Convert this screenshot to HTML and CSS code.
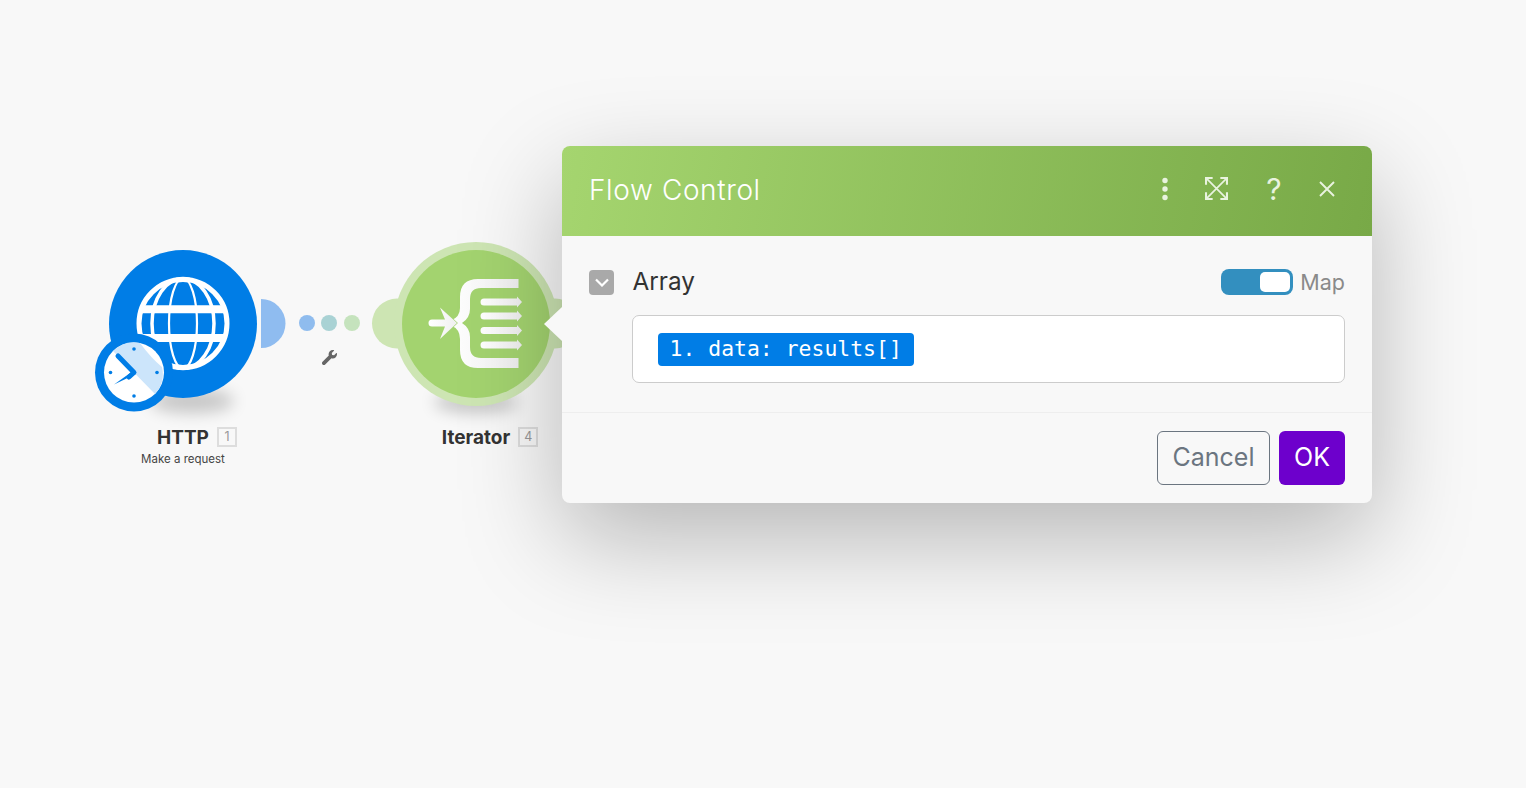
FILE: index.html
```html
<!DOCTYPE html>
<html lang="en">
<head>
<meta charset="utf-8">
<title>Flow Control</title>
<link rel="stylesheet" href="styles.css">
</head>
<body>
<main class="canvas">
  <section class="node node-http">
    <svg class="node-art" viewBox="73 240 220 170" aria-hidden="true">
      <defs>
        <filter id="soft" x="-40%" y="-100%" width="180%" height="300%"><feGaussianBlur stdDeviation="8"/></filter>
      </defs>
      <ellipse cx="192" cy="401" rx="42" ry="12" fill="#000" opacity=".2" filter="url(#soft)"/>
      <path d="M261 299 A24.500 24.500 0 0 1 261 348 Z" fill="#8fbcf0"/>
      <circle cx="183" cy="324" r="74" fill="#007de6"/>
      <g fill="none" stroke="#fff">
        <circle cx="183" cy="323.5" r="44" stroke-width="5"/>
        <ellipse cx="183" cy="323.5" rx="31" ry="45" stroke-width="3.500"/>
        <ellipse cx="183" cy="323.5" rx="14" ry="45" stroke-width="2.2"/>
        <path d="M142 309.300H224M142 338H224" stroke-width="8"/>
      </g>
      <circle cx="134" cy="372.5" r="39" fill="#007de6"/>
      <circle cx="134" cy="372.5" r="30" fill="#fff"/>
      <path d="M134 372.5 L113 351 A30 30 0 0 1 140 343 Q151 358 162 367 A30 30 0 0 1 155 394 Z" fill="#cce5fb"/>
      <g fill="#007de6">
        <circle cx="134" cy="349" r="1.8"/>
        <circle cx="157" cy="372.5" r="1.8"/>
        <circle cx="134" cy="396" r="1.8"/>
        <circle cx="110.500" cy="372.5" r="1.8"/>
        <path d="M133 371 L136 374 L114 384.500 Z"/>
      </g>
      <path d="M118 356 L134 372.500 L129 377" fill="none" stroke="#007de6" stroke-width="5" stroke-linecap="round" stroke-linejoin="round"/>
    </svg>
    <div class="node-title">HTTP<span class="node-id">1</span></div>
    <div class="node-sub">Make a request</div>
  </section>

  <section class="connector">
    <div class="dots">
      <span class="dot dot-a"></span>
      <span class="dot dot-b"></span>
      <span class="dot dot-c"></span>
    </div>
    <svg class="wrench" viewBox="0 0 512 512" aria-hidden="true"><path fill="#666" d="M507.73 109.1c-2.24-9.03-13.54-12.09-20.12-5.51l-74.36 74.36-67.88-11.31-11.31-67.88 74.36-74.36c6.62-6.62 3.43-17.9-5.66-20.16-47.38-11.74-99.55.91-136.58 37.93-39.64 39.64-50.55 97.1-34.05 147.2L18.74 402.76c-24.99 24.99-24.99 65.51 0 90.5 24.99 24.99 65.51 24.99 90.5 0l213.21-213.21c50.12 16.71 107.47 5.68 147.37-34.22 37.07-37.07 49.7-89.32 37.91-136.73z"/></svg>
  </section>

  <section class="node node-iter">
    <svg class="node-art" viewBox="366 240 220 170" aria-hidden="true">
      <defs>
        <linearGradient id="arrowfill" x1="0" x2="1" y1="0" y2="0"><stop offset="0" stop-color="#fff"/><stop offset="1" stop-color="#f0f0f0"/></linearGradient>
        <filter id="soft2" x="-40%" y="-100%" width="180%" height="300%"><feGaussianBlur stdDeviation="8"/></filter>
      </defs>
      <ellipse cx="476" cy="402" rx="42" ry="11" fill="#000" opacity=".2" filter="url(#soft2)"/>
      <circle cx="397" cy="323.500" r="25" fill="#cde5b3"/>
      <circle cx="555" cy="323.500" r="25" fill="#cde5b3"/>
      <circle cx="476" cy="324" r="82" fill="#cde5b3"/>
      <circle cx="476" cy="324" r="74" fill="#a3d36f"/>
      <g fill="url(#arrowfill)">
        <path d="M518.500 279V288H481Q470 288 470 299V309Q470 318 462 323Q470 328 470 337V347Q470 358 481 358H518.500V368H478Q460 368 460 350V339Q460 329 451 325.500L454 323L451 320.500Q460 317 460 308V297Q460 279 478 279Z"/>
        <path class="entry-arrow" d="M432 319.500H445L440 307.500L457 323L440 339L445 326.500H432Q428.500 326.500 428.500 323Q428.500 319.500 432 319.500Z"/>
        <path d="M484 298.500H517V296.500L522 302L517 307.500V305.500H484Q480.500 305.500 480.500 302Q480.500 298.500 484 298.500Z"/>
        <path d="M484 312.500H517V310.500L522 316L517 321.500V319.500H484Q480.500 319.500 480.500 316Q480.500 312.500 484 312.500Z"/>
        <path d="M484 327H517V325L522 330.500L517 336V334H484Q480.500 334 480.500 330.500Q480.500 327 484 327Z"/>
        <path d="M484 341.500H517V339.500L522 345L517 350.500V348.500H484Q480.500 348.500 480.500 345Q480.500 341.500 484 341.500Z"/>
      </g>
    </svg>
    <div class="node-title">Iterator<span class="node-id">4</span></div>
  </section>

  <section class="modal">
    <header class="modal-head">
      <h1 class="modal-title">Flow Control</h1>
      <div class="modal-actions">
        <svg class="action action-dots" viewBox="0 0 6 24" aria-hidden="true"><circle cx="3" cy="3.500" r="2.700"/><circle cx="3" cy="12" r="2.700"/><circle cx="3" cy="20.500" r="2.700"/></svg>
        <svg class="action action-expand" viewBox="0 0 24 24" aria-hidden="true"><path d="M1 8V1H8M16 1H23V8M23 16V23H16M8 23H1V16" fill="none" stroke-width="2.300"/><path d="M2 2L22 22M22 2L2 22" fill="none" stroke-width="1.800"/></svg>
        <span class="action-help">?</span>
        <svg class="action action-close" viewBox="0 0 16 16" aria-hidden="true"><path d="M1 1L15 15M15 1L1 15" fill="none" stroke-width="1.900"/></svg>
      </div>
    </header>
    <div class="modal-body">
      <div class="field-head">
        <span class="check"><svg class="chev" viewBox="0 0 14 9" aria-hidden="true"><path d="M1 1.500L7 7.500L13 1.500" fill="none" stroke="#fff" stroke-width="2.200"/></svg></span>
        <span class="field-label">Array</span>
        <span class="map-toggle"><span class="toggle-knob"></span></span>
        <span class="map-label">Map</span>
      </div>
      <div class="field-input"><span class="pill">1. data: results[]</span></div>
    </div>
    <footer class="modal-foot">
      <button class="btn btn-cancel">Cancel</button>
      <button class="btn btn-ok">OK</button>
    </footer>
    <span class="pointer"></span>
  </section>
</main>
</body>
</html>
```

FILE: styles.css
```css
* { box-sizing: border-box; }
html, body { margin: 0; height: 100%; }
body {
  background: #f8f8f8;
  font-family: Inter, "Liberation Sans", sans-serif;
  color: #333;
  overflow: hidden;
}
.canvas { position: relative; width: 1526px; height: 788px; overflow: hidden; }

.node { position: absolute; width: 220px; text-align: center; }
.node-http { left: 73px; top: 240px; }
.node-iter { left: 366px; top: 240px; }
.node-art { display: block; width: 220px; height: 170px; overflow: visible; }
.entry-arrow { stroke: #a3d36f; stroke-width: 1.2px; paint-order: stroke; }
.node-title {
  position: relative;
  display: inline-block;
  margin-top: 16px;
  font-size: 19px;
  line-height: 24px;
  font-weight: 700;
  color: #333;
}
.node-id {
  position: absolute;
  left: calc(100% + 8px);
  top: 1px;
  width: 20px;
  height: 20px;
  border: 2px solid #ddd;
  font-size: 12.500px;
  line-height: 16px;
  font-weight: 400;
  color: #999;
}
.node-sub { font-size: 11.500px; line-height: 14px; margin-top: 2px; color: #444; }

.connector {
  position: absolute;
  left: 298px;
  top: 315px;
  width: 62px;
  display: flex;
  flex-direction: column;
  align-items: center;
}
.dots { display: flex; gap: 6.500px; }
.dot { width: 16px; height: 16px; border-radius: 50%; }
.dot-a { background: #8fbcee; }
.dot-b { background: #a9d2d4; }
.dot-c { background: #c5e3bd; }
.wrench { width: 15px; height: 15px; margin-top: 19px; }

.modal {
  position: absolute;
  left: 562px;
  top: 146px;
  width: 810px;
  height: 357px;
  background: #f8f8f8;
  border-radius: 8px;
  box-shadow: 0 35px 100px rgba(0, 0, 0, .27);
  display: flex;
  flex-direction: column;
}
.pointer {
  position: absolute;
  left: -18px;
  top: 161px;
  width: 0;
  height: 0;
  border-style: solid;
  border-width: 17px 18px 17px 0;
  border-color: transparent #f8f8f8 transparent transparent;
}
.modal-head {
  height: 90px;
  flex: none;
  display: flex;
  align-items: center;
  justify-content: space-between;
  padding: 0 37px 0 27px;
  border-radius: 8px 8px 0 0;
  background: linear-gradient(100deg, #a5d56f 0%, #78a947 100%);
}
.modal-title { margin: 0 0 2px; font-size: 28px; font-weight: 300; color: #fff; letter-spacing: .62px; }
.modal-actions { display: flex; align-items: center; margin-top: -5px; }
.action { display: block; stroke: #e9f3df; fill: #e9f3df; }
.action path { stroke: #e9f3df; }
.action-dots { width: 6px; height: 24px; margin-right: 37px; stroke: none; }
.action-expand { width: 23px; height: 23px; margin-right: 36px; }
.action-help { width: 20px; text-align: center; font-size: 30px; line-height: 30px; color: #e9f3df; margin-right: 35px; font-weight: 400; }
.action-close { width: 16px; height: 16px; }

.modal-body { flex: 1; padding: 33px 27px 0; }
.field-head { display: flex; align-items: center; height: 27px; }
.check {
  width: 25px;
  height: 25px;
  border-radius: 4px;
  background: #a9a9a9;
  display: flex;
  align-items: center;
  justify-content: center;
  margin-right: 18.500px;
}
.chev { width: 14px; height: 9px; }
.field-label { font-size: 24.300px; font-weight: 400; color: #333; flex: 1; margin-top: -4px; }
.map-toggle {
  width: 72px;
  height: 26px;
  border-radius: 8px;
  background: #338fbf;
  display: flex;
  justify-content: flex-end;
  align-items: center;
  padding-right: 3px;
  margin: -2px 7px 0 0;
}
.toggle-knob { width: 30px; height: 20px; border-radius: 5px; background: #fff; }
.map-label { font-size: 21.500px; color: #8a8a8a; font-weight: 400; margin-top: -1px; }
.field-input {
  margin: 19px 0 0 43px;
  height: 68px;
  background: #fff;
  border: 1px solid #ccc;
  border-radius: 7px;
  padding: 17px 25px;
  display: flex;
  align-items: flex-start;
}
.pill {
  height: 33px;
  padding: 0 12px 0 11.500px;
  border-radius: 4px;
  background: #007de6;
  color: #fff;
  font-family: "DejaVu Sans Mono", "Liberation Mono", monospace;
  font-size: 21.400px;
  letter-spacing: .03px;
  line-height: 31px;
  white-space: nowrap;
}
.modal-foot {
  height: 91px;
  flex: none;
  border-top: 1px solid #eee;
  display: flex;
  justify-content: flex-end;
  align-items: flex-start;
  gap: 9px;
  padding: 18px 27px 0;
}
.btn {
  height: 54px;
  border-radius: 6px;
  font-family: inherit;
  font-size: 25px;
  font-weight: 400;
  padding: 0 0 2px;
  cursor: pointer;
}
.btn-cancel { width: 113px; background: #f8f8f8; color: #6b7580; border: 1px solid #6b7580; }
.btn-ok { width: 66px; background: #6d00cc; color: #fff; border: 0; }
```
